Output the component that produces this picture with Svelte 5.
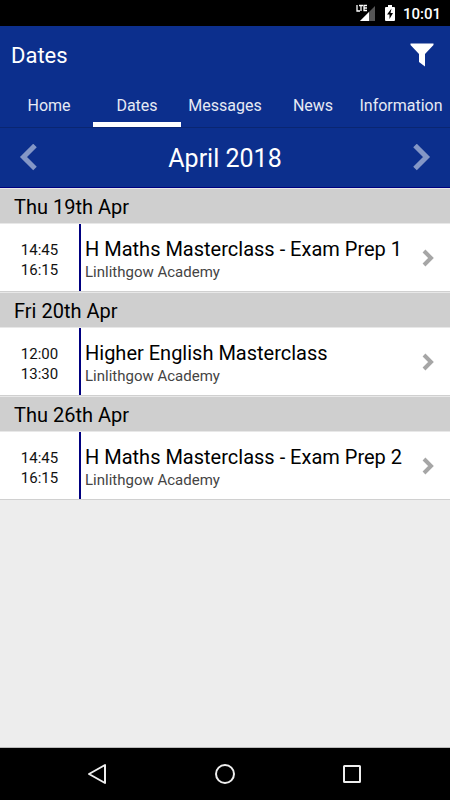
<script lang="ts">
	interface Entry {
		day: string;
		start: string;
		end: string;
		title: string;
		place: string;
	}

	const tabs = ['Home', 'Dates', 'Messages', 'News', 'Information'];

	const months = [
		'January',
		'February',
		'March',
		'April',
		'May',
		'June',
		'July',
		'August',
		'September',
		'October',
		'November',
		'December'
	];

	const entries: Record<string, Entry[]> = {
		'April 2018': [
			{
				day: 'Thu 19th Apr',
				start: '14:45',
				end: '16:15',
				title: 'H Maths Masterclass - Exam Prep 1',
				place: 'Linlithgow Academy'
			},
			{
				day: 'Fri 20th Apr',
				start: '12:00',
				end: '13:30',
				title: 'Higher English Masterclass',
				place: 'Linlithgow Academy'
			},
			{
				day: 'Thu 26th Apr',
				start: '14:45',
				end: '16:15',
				title: 'H Maths Masterclass - Exam Prep 2',
				place: 'Linlithgow Academy'
			}
		]
	};

	let active = $state('Dates');
	let month = $state(2018 * 12 + 3);

	let label = $derived(`${months[month % 12]} ${Math.floor(month / 12)}`);
	let visible = $derived(entries[label] ?? []);
</script>

<div class="screen">
	<div class="status">
		<svg width="20" height="18" viewBox="0 0 20 18" aria-hidden="true">
			<path d="M19 2v15H4z" fill="#555" />
			<path d="M13 8v9H4z" fill="#fff" />
			<path d="M1 1v6h3M3 1.500h4M5 1v6M11 1.500H8v5h3M8 4h3" fill="none" stroke="#fff" stroke-width="1.3" />
		</svg>
		<svg class="battery" width="10" height="16" viewBox="0 0 10 16" aria-hidden="true">
			<path d="M3 0h4v2h2q1 0 1 1v12q0 1-1 1H1q-1 0-1-1V3q0-1 1-1h2z" fill="#fff" />
			<path d="M6.500 3.500L2 9.500h2.500V14L8 8H5.500z" fill="#000" />
		</svg>
		<span class="clock">10:01</span>
	</div>

	<header>
		<div class="title">
			<h1>{active}</h1>
			<button aria-label="Filter">
				<svg width="24" height="24" viewBox="0 0 24 24">
					<path d="M0.500 0.500h23v1.500L15 11v12.500L9 19v-8L0.500 2z" fill="#fff" />
				</svg>
			</button>
		</div>
		<nav>
			{#each tabs as tab}
				<button class:active={tab === active} onclick={() => (active = tab)}>{tab}</button>
			{/each}
		</nav>
	</header>

	<div class="month">
		<button aria-label="Previous month" onclick={() => (month -= 1)}>
			<svg width="18" height="28" viewBox="0 0 18 28">
				<path d="M16 1.500L4.500 13L16 24.500" />
			</svg>
		</button>
		<h2>{label}</h2>
		<button aria-label="Next month" onclick={() => (month += 1)}>
			<svg width="18" height="28" viewBox="0 0 18 28">
				<path d="M2 1.500L13.500 13L2 24.500" />
			</svg>
		</button>
	</div>

	<main>
		{#each visible as entry}
			<section>
				<h3>{entry.day}</h3>
				<button class="entry">
					<span class="times">
						<span>{entry.start}</span>
						<span>{entry.end}</span>
					</span>
					<span class="details">
						<span class="name">{entry.title}</span>
						<span class="place">{entry.place}</span>
					</span>
					<svg width="14" height="18" viewBox="0 0 14 18" aria-hidden="true">
						<path d="M3 2l7 7-7 7" />
					</svg>
				</button>
			</section>
		{/each}
	</main>

	<footer>
		<button aria-label="Back">
			<svg width="22" height="22" viewBox="0 0 22 22">
				<path d="M18 2v18L2 11z" />
			</svg>
		</button>
		<button aria-label="Home">
			<svg width="22" height="22" viewBox="0 0 22 22">
				<circle cx="11" cy="11" r="9" />
			</svg>
		</button>
		<button aria-label="Recent apps">
			<svg width="22" height="22" viewBox="0 0 22 22">
				<rect x="3" y="3" width="16" height="16" rx="0.500" />
			</svg>
		</button>
	</footer>
</div>

<style>
	:global(body) {
		margin: 0;
	}

	.screen {
		display: flex;
		flex-direction: column;
		min-height: 100vh;
		background: #ededed;
		color: #000;
		font-family: Roboto, sans-serif;
	}

	h1,
	h2,
	h3 {
		margin: 0;
		font-weight: 400;
	}

	button {
		padding: 0;
		border: 0;
		background: none;
		color: inherit;
		font: inherit;
		cursor: pointer;
	}

	svg {
		display: block;
	}

	.status {
		display: flex;
		align-items: center;
		justify-content: flex-end;
		height: 26px;
		padding-right: 9px;
		background: #000;
		color: #fff;
	}

	.battery {
		margin: 0 8px 0 9px;
	}

	.clock {
		padding-top: 1px;
		font-size: 15px;
		font-weight: 500;
	}

	header {
		background: #0c2f8d;
		color: #fff;
	}

	.title {
		display: flex;
		align-items: center;
		justify-content: space-between;
		height: 58px;
		padding: 0 16px 0 11px;
	}

	h1 {
		font-size: 22px;
	}

	nav {
		display: flex;
		height: 43px;
		padding: 0 5px;
		border-bottom: 1px solid #0a2672;
	}

	nav button {
		flex: 1 1 0;
		min-width: 0;
		border-top: 4px solid transparent;
		border-bottom: 5px solid transparent;
		font-size: 16px;
		white-space: nowrap;
		color: #e6eaf4;
	}

	nav button.active {
		border-bottom-color: #fff;
	}

	.month {
		display: flex;
		align-items: center;
		justify-content: space-between;
		height: 59px;
		padding: 0 19px;
		border-bottom: 1px solid #000080;
		background: #0c2f8d;
		color: #fff;
	}

	.month path {
		fill: none;
		stroke: #8497c6;
		stroke-width: 5px;
	}

	h2 {
		padding-top: 2px;
		font-size: 25px;
		line-height: 30px;
	}

	main {
		flex: 1;
		border-bottom: 1px solid #bbb;
	}

	h3 {
		box-sizing: border-box;
		height: 36px;
		padding-left: 14px;
		border-top: 1px solid #e8e8e8;
		border-bottom: 1px solid #e8e8e8;
		background: #cfcfcf;
		font-size: 20px;
		line-height: 36px;
	}

	.entry {
		display: flex;
		align-items: center;
		width: 100%;
		height: 68px;
		padding-right: 15px;
		border-bottom: 1px solid #d0d0d0;
		background: #fff;
		text-align: left;
	}

	.times {
		display: flex;
		flex-direction: column;
		justify-content: center;
		box-sizing: border-box;
		width: 81px;
		height: 100%;
		padding-top: 4px;
		border-right: 2px solid #000080;
		color: #111;
		font-size: 15px;
		line-height: 20px;
		text-align: center;
	}

	.details {
		display: flex;
		flex: 1;
		flex-direction: column;
		padding: 2px 0 0 4px;
	}

	.name {
		font-size: 20px;
		line-height: 26px;
	}

	.place {
		color: #444;
		font-size: 15px;
		line-height: 20px;
	}

	.entry path {
		fill: none;
		stroke: #a6a6a6;
		stroke-width: 4px;
	}

	footer {
		display: flex;
		align-items: center;
		justify-content: center;
		gap: 105px;
		height: 52px;
		background: #000;
	}

	footer path,
	footer circle,
	footer rect {
		fill: none;
		stroke: #eee;
		stroke-width: 2px;
		stroke-linejoin: round;
	}
</style>
